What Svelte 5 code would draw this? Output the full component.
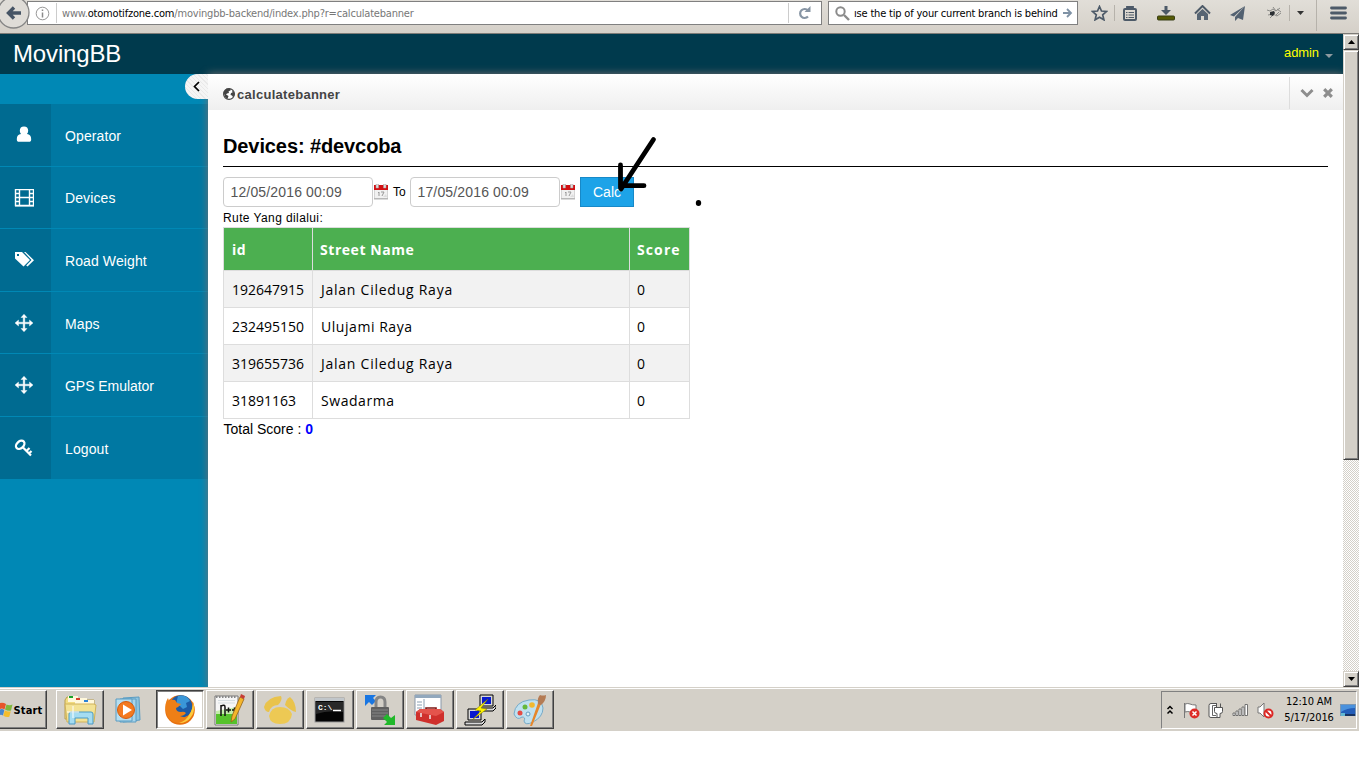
<script>
  const menu = ['Operator', 'Devices', 'Road Weight', 'Maps', 'GPS Emulator', 'Logout'];
  const glyphs = ['user', 'film', 'tags', 'move', 'move', 'key'];
  const rows = [
    ['192647915', 'Jalan Ciledug Raya', '0'],
    ['232495150', 'Ulujami Raya', '0'],
    ['319655736', 'Jalan Ciledug Raya', '0'],
    ['31891163', 'Swadarma', '0']
  ];
</script>

{#snippet calendar()}
  <svg class="cal" width="14" height="16" viewBox="0 0 14 16">
    <rect x="0" y="1" width="14" height="14.5" fill="#b8b8b8" />
    <rect x="0.5" y="5" width="13" height="9" fill="#f1f1f1" />
    <rect x="0" y="1" width="14" height="5" fill="#d20f12" />
    <path d="M2 0h2.500v4H2zM9.500 0H12v4H9.500z" fill="#ddd" stroke="#a99" stroke-width=".5" />
    <path d="M4 9l1-1v4M7 8h3l-2 4" fill="none" stroke="#999" />
    <path d="M9 13l3-3 1 3z" fill="#ddd" />
  </svg>
{/snippet}

<div class="screen">
  <div class="toolbar">
    <svg class="back" width="31" height="30" viewBox="0 0 31 30">
      <circle cx="13.500" cy="12.500" r="15.500" fill="#dfdcd7" stroke="#858585" stroke-width="1.300" />
      <path d="M14 7.500L8.500 13l5.500 5.500M9 13h12" fill="none" stroke="#465465" stroke-width="3.400" />
    </svg>
    <div class="url">
      <svg class="info" width="15" height="15" viewBox="0 0 15 15"><circle cx="7.500" cy="7.500" r="6.300" fill="none" stroke="#979797" /><path d="M7.500 3.500v1.500M7.500 6.500v5" stroke="#8a8a8a" stroke-width="1.500" /></svg>
      <i></i>
      <span class="address">www.<b>otomotifzone.com</b>/movingbb-backend/index.php?r=calculatebanner</span>
      <svg class="reload" width="33" height="20" viewBox="0 0 33 20"><path d="M.5 0v20" stroke="#ccc" /><path d="M20 7.500a4.500 4.500 0 1 0 0 6" fill="none" stroke="#8795a4" stroke-width="2.200" /><path d="M16.500 9h6V3z" fill="#8795a4" /></svg>
    </div>
    <div class="search">
      <svg width="15" height="15" viewBox="0 0 15 15"><circle cx="5.500" cy="5.500" r="4.200" fill="none" stroke="#8b8b8b" stroke-width="2" /><path d="M9 9l5 5" stroke="#8b8b8b" stroke-width="2.400" /></svg>
      <span>ıse the tip of your current branch is behind</span>
      <svg width="10" height="10" viewBox="0 0 10 10"><path d="M0 5h8M4 1l4 4-4 4" fill="none" stroke="#7f92a5" stroke-width="1.800" /></svg>
    </div>
    <div class="tools">
      <span class="line"><svg width="17" height="16" viewBox="0 0 17 16"><path d="M8.500 1.500l2 4.500 5 .5-3.800 3.300 1.200 5-4.400-2.600-4.400 2.600 1.200-5L1.500 6.500l5-.5z" fill="none" stroke="#4d5a68" stroke-width="1.700" /></svg></span>
      <span><svg width="14" height="15" viewBox="0 0 14 15"><rect x="1" y="3" width="12" height="11" rx="1" fill="none" stroke="#4d5a68" stroke-width="2" /><path d="M4 3V1h6v2" fill="none" stroke="#4d5a68" stroke-width="1.800" /><path d="M3 6.500h1.500M5.500 6.500H11M3 9h1.500M5.500 9H11M3 11.500h1.500M5.500 11.500H11" stroke="#4d5a68" stroke-width="1.200" /></svg></span>
      <span><svg width="18" height="15" viewBox="0 0 18 15"><path d="M7.500 0h3v4H14L9 9 4 4h3.500z" fill="#4d5a68" /><rect x=".5" y="10" width="17" height="4" rx="1" fill="#565b05" stroke="#383e17" /></svg></span>
      <span><svg width="17" height="16" viewBox="0 0 17 16"><path d="M1 8.500L8.500 1 16 8.500" fill="none" stroke="#4d5a68" stroke-width="2" /><path d="M3 9l5.500-5L14 9v6h-4v-4H7v4H3z" fill="#566473" /></svg></span>
      <span><svg width="15" height="15" viewBox="0 0 15 15"><path d="M15 0L0 9l4 1.500zM15 0L5 11v4l3-3 5 2z" fill="#536171" /></svg></span>
      <span class="line"><svg width="16" height="14" viewBox="0 0 16 14"><path d="M1 4l3 1L7 3l3 2 4-3M2 9l5-1 4 2 4-3M4 12l3-3M10 9l3-3M7 1l3 4M11 3l4 3" fill="none" stroke="#8b8b88" /><path d="M4 6l4-1 1 2-2 3-3-1z" fill="#2c3034" /></svg></span>
      <span class="line caret"><svg width="7" height="4" viewBox="0 0 7 4"><path d="M0 0h7L3.500 4z" fill="#333" /></svg></span>
      <span><svg width="17" height="14" viewBox="0 0 17 14"><path d="M1.500 2h14M1.500 7h14M1.500 12h14" stroke="#4d5a68" stroke-width="2.800" stroke-linecap="round" /></svg></span>
    </div>
  </div>

  <div class="page">
    <div class="app">
      <header><span class="brand">MovingBB</span><span class="admin">admin</span><svg width="8" height="4" viewBox="0 0 8 4"><path d="M0 0h8L4 4z" fill="#8e9aa0" /></svg></header>
      <div class="body">
        <nav>
          <button class="toggle" aria-label="Collapse"><svg width="7" height="11" viewBox="0 0 7 11"><path d="M6 1L1.500 5.500 6 10" fill="none" stroke="#000" stroke-width="1.700" /></svg></button>
          <ul>
            {#each menu as label, i}
              <li>
                <span class="glyph">
                  <svg width="20" height="18" viewBox="0 0 20 18" fill="#fff">
                    {#if glyphs[i] === 'user'}
                      <path d="M10 .5c2.700 0 4.200 1.600 4.200 4.200 0 1.300-.4 2.400-1.200 3.300 2.700.2 4.200 2 4.200 5.200 0 1.800-.8 2.600-2.200 2.600H5c-1.400 0-2.200-.8-2.200-2.600C2.800 10 4.300 8.200 7 8c-.8-.9-1.200-2-1.200-3.300C5.800 2.100 7.300.500 10 .500z" />
                    {:else if glyphs[i] === 'film'}
                      <path d="M1.500.500h18v16h-18zM5.500.500v16M15.500.500v16M5.500 8.500h10M1.500 4.500h4M1.500 8.500h4M1.500 12.500h4M15.500 4.500h4M15.500 8.500h4M15.500 12.500h4" fill="none" stroke="#fff" stroke-width="1.400" /><path d="M1 16h19v1.500H1z" />
                    {:else if glyphs[i] === 'tags'}
                      <path d="M1 1h7l8 8-6.500 6.500L1 7.500zM3 3v2h2V3z" fill-rule="evenodd" /><path d="M10 1h1.500L20 9.300 13.500 15.500l-1.300-1L17.500 9z" />
                    {:else if glyphs[i] === 'move'}
                      <path d="M10 .2l3 3.300h-2.200v4.700h4.700V6L19 9l-3.500 3V9.800h-4.700v4.700H13l-3 3.300-3-3.300h2.200V9.800H4.500V12L1 9l3.500-3v2.200h4.700V3.500H7z" stroke="#fff" stroke-width=".4" />
                    {:else}
                      <ellipse cx="6.200" cy="5.800" rx="4.800" ry="3.400" transform="rotate(-42 6.200 5.800)" fill="none" stroke="#fff" stroke-width="2.300" /><path d="M8.500 8l8.500 8.500M12.500 12l3-3M15 14.500l2.500-2.500" fill="none" stroke="#fff" stroke-width="2.200" />
                    {/if}
                  </svg>
                </span>
                <span class="label">{label}</span>
              </li>
            {/each}
          </ul>
        </nav>
        <main>
          <div class="crumb">
            <svg width="12" height="12" viewBox="0 0 12 12"><circle cx="6" cy="6" r="5.400" fill="#fff" stroke="#444" stroke-width="1.200" /><path d="M.5 4l3-3.500L7 .5 8 2 5.500 3.500 6 5 4 5.500 3 6.500 5.500 8 4.500 11 2 9zM9 2l2.500 3v2L10 9 9 7.500 7.500 7 8 5l1.500-.5z" fill="#444" /></svg>
            <b>calculatebanner</b>
            <div class="acts">
              <svg width="14" height="10" viewBox="0 0 14 10"><path d="M1.500 2l5.500 5.500L12.500 2" fill="none" stroke="#8d8d8d" stroke-width="3" /></svg>
              <svg width="10" height="10" viewBox="0 0 10 10"><path d="M1.200 1.200l7.600 7.600M8.800 1.200L1.200 8.800" stroke="#8d8d8d" stroke-width="3.200" /></svg>
            </div>
          </div>
          <section>
            <h1>Devices: #devcoba</h1>
            <div class="range">
              <input value="12/05/2016 00:09" />
              {@render calendar()}
              <span class="to">To</span>
              <input value="17/05/2016 00:09" />
              {@render calendar()}
              <button class="calc">Calc</button>
            </div>
            <p class="rute">Rute Yang dilalui:</p>
            <table>
              <thead><tr><th>id</th><th>Street Name</th><th>Score</th></tr></thead>
              <tbody>
                {#each rows as r}
                  <tr><td>{r[0]}</td><td class="street">{r[1]}</td><td>{r[2]}</td></tr>
                {/each}
              </tbody>
            </table>
            <p class="total">Total Score : <b>0</b></p>
          </section>
        </main>
      </div>
    </div>
    <div class="scroll">
      <div class="sbtn"><svg width="7" height="4" viewBox="0 0 7 4"><path d="M0 4h7L3.500 0z" /></svg></div>
      <div class="thumb"></div>
      <div class="track"></div>
      <div class="sbtn"><svg width="7" height="4" viewBox="0 0 7 4"><path d="M0 0h7L3.500 4z" /></svg></div>
    </div>
  </div>

  <div class="taskbar">
    <div class="start">
      <svg width="13" height="16" viewBox="0 0 13 16"><path d="M0 1q3-1 6 1L4.500 7.500Q2 6 0 7z" fill="#e8552b" /><path d="M6.500 2.500q3 1.500 6 0l-1.500 6q-3 1-6-1z" fill="#80b83b" /><path d="M0 7.500q2-1 4.300.5L3 13.500Q1.500 12.500 0 13z" fill="#4587cf" /><path d="M4.800 8.200q3 2 6 1l-1.500 5.500q-3 1-6-1z" fill="#f4bd2c" /></svg>
      <b>Start</b>
    </div>
    <div class="tasks">
      <div class="task">
        <svg width="34" height="32" viewBox="0 0 34 32"><path d="M2 6l2-3h9l2 3h16v19H2z" fill="#f2dc82" stroke="#b99f50" /><rect x="5" y="2" width="10" height="6" fill="#fff8dc" /><rect x="6" y="2" width="4" height="2" fill="#18a42b" /><rect x="12" y="4" width="12" height="6" fill="#fff8dc" /><rect x="13" y="4" width="4" height="2" fill="#d83e2a" /><rect x="20" y="6" width="11" height="5" fill="#fff8dc" /><rect x="21" y="6" width="4" height="2" fill="#2a83d8" /><path d="M2 10h29l2 1-2 17H4z" fill="#f3e294" stroke="#d0b25a" /><path d="M6 30V20q0-2 2-2h20q2 0 2 2v10h-5v-6H12v6z" fill="#a5dcf1" stroke="#4b9ac4" /><path d="M10 12v12M4 18h12" stroke="#fff" /></svg>
      </div>
      <div class="task flat">
        <svg width="30" height="28" viewBox="0 0 30 28"><path d="M8 2l16-1 1 23-17 2z" fill="#8fc5df" stroke="#5b9cc2" /><path d="M5 3h16v23H5z" fill="#a8d5ec" stroke="#5b9cc2" /><path d="M1 3h16v22H1z" fill="#b6def0" stroke="#5b9cc2" /><circle cx="11" cy="14" r="8.500" fill="#f47a20" stroke="#d35b0f" /><path d="M8 8.500v11l9-5.500z" fill="#fff" /></svg>
      </div>
      <div class="task pressed">
        <svg width="32" height="32" viewBox="0 0 32 32"><circle cx="16" cy="16" r="14.800" fill="#e8710f" /><circle cx="17" cy="12.500" r="11.300" fill="#1d5ba6" /><path d="M14 2q8-2 12 5l-4 2 1 4-4 2-3-3-4-1 1-5z" fill="#3a97d8" /><path d="M29 8q3 8-1 14-5 8-14 7Q4 28 2 18 0 10 4 4l1 3q3-2 6-1l2 3 4 1-3 3-2 1q0 4 5 4 3-1 5 1-2 3-6 3 6 3 10-2 3-5 3-12z" fill="#ee7f16" /><path d="M29 8q3 9-2 15-4 6-12 6 8-3 10-8 4-6 4-13z" fill="#fccb3d" /></svg>
      </div>
      <div class="task">
        <svg width="32" height="32" viewBox="0 0 32 32"><path d="M1 2h23v29H1z" fill="#f6f6f6" stroke="#777" /><path d="M2 18l21-4v16H2z" fill="#56c22c" /><path d="M2 17l21-4v7H2z" fill="#c3edaa" /><path d="M2 3h21" stroke="#888" stroke-width="2" stroke-dasharray="1.500 1.500" /><path d="M4 6.500h17M4 9h17" stroke="#d5dde1" /><path d="M7 22V11M7 12q4-2 4 1v9M12 16h5M14.500 13.500v5M18 16h5M20.500 13.500v5" fill="none" stroke="#111" stroke-width="1.500" /><path d="M17 28l1-6L26 3l4 2-9 20z" fill="#f4b62c" stroke="#96631b" stroke-width=".8" /><path d="M26 3l1-3 4 2-1 3z" fill="#c73c35" /></svg>
      </div>
      <div class="task">
        <svg width="32" height="30" viewBox="0 0 32 30"><path d="M0 12Q3 2 17 1q2 4-3 9-7 0-9 7-4 0-5-5z" fill="#e9c34c" /><path d="M21 10Q22 4 26 2q6 5 6 15-5-1-11-7z" fill="#e9c34c" /><path d="M5 21q2-9 11-9 9 0 12 7-1 10-12 10Q6 29 5 21z" fill="#edc954" /></svg>
      </div>
      <div class="task">
        <svg width="32" height="28" viewBox="0 0 32 28"><rect x="1" y="2" width="29" height="24" fill="#050505" stroke="#999" /><rect x="1" y="2" width="29" height="3" fill="#c1c6ca" /><path d="M2 6h27v10Q14 14 2 18z" fill="#292929" /><text x="4" y="14" fill="#fff" font-size="8" font-weight="700" font-family="Liberation Mono">C:\</text><path d="M19 14.500h8" stroke="#fff" stroke-width="1.500" /></svg>
      </div>
      <div class="task">
        <svg width="32" height="32" viewBox="0 0 32 32"><path d="M1 1h11L9 4l3 3-4 4-3-3-4 4z" fill="#1976e2" /><path d="M12 14V8q0-5 4.500-5T21 8v6" fill="none" stroke="#858585" stroke-width="3" /><rect x="7" y="13" width="18" height="13" rx="1" fill="#606060" /><path d="M8 16h16M8 19h16M8 22h16" stroke="#858585" /><path d="M31 31H20l3-3-4-4 4-4 4 4 4-3z" fill="#20b82a" /></svg>
      </div>
      <div class="task">
        <svg width="32" height="32" viewBox="0 0 32 32"><path d="M1 1h26v20H1z" fill="#fff" stroke="#8998a9" /><path d="M1 1h26v3H1z" fill="#92a8bd" /><path d="M3 8h5M3 11h5M3 14h5M10 5v15" stroke="#8ba0b3" /><path d="M12 16v-2h10v2" fill="none" stroke="#7d1714" stroke-width="1.600" /><path d="M2 18l4-3h20l4 3v9l-8 4-20-5z" fill="#cf302c" /><path d="M2 18l4-3h20l4 3-8 4z" fill="#e4544c" /><path d="M7 19v4M16 21v4" stroke="#eee" stroke-width="1.500" /></svg>
      </div>
      <div class="task">
        <svg width="32" height="32" viewBox="0 0 32 32"><path d="M16 1h13v11H16zM14 14h15l3-3v3l-3 3H14zM4 15h13v11H4zM1 28h17l3-3v3l-3 3H1z" fill="#d8d8d8" stroke="#000" /><path d="M18 3h9v7h-9zM6 17h9v7H6z" fill="#0719ce" /><path d="M24 5L11 16l6 1-9 9 15-11-6-1z" fill="#fff200" stroke="#777500" stroke-width=".5" /></svg>
      </div>
      <div class="task">
        <svg width="34" height="32" viewBox="0 0 34 32"><path d="M1 20Q2 8 16 6q13-2 14 8 0 9-10 14-8 4-9-1 2-4-2-4-5 4-8-3z" fill="#bfe0ef" stroke="#76aac8" /><circle cx="7" cy="19" r="2.500" fill="#e54b43" /><circle cx="12" cy="13" r="2.500" fill="#66b83b" /><circle cx="19" cy="11" r="2.800" fill="#f2b82e" /><circle cx="15" cy="20" r="2" fill="#e3f2f7" stroke="#659dc0" /><path d="M17 32L25 9l3 1-9 22z" fill="#e5872c" /><path d="M25 10q-1-6 2-9 3 1 6 0 0 6-5 10z" fill="#b47b54" /></svg>
      </div>
    </div>
    <div class="tray">
      <svg width="8" height="10" viewBox="0 0 8 10"><path d="M1.500 4L4 1.500 6.500 4M1.500 8.500L4 6l2.500 2.500" fill="none" stroke="#000" stroke-width="1.500" /></svg>
      <svg class="flag" width="17" height="17" viewBox="0 0 17 17"><path d="M1.500 1v15M2 2q3-1 5 0t6 1v7q-4 1-6 0t-5 0z" fill="#fff" stroke="#777" /><circle cx="11.500" cy="11.500" r="5" fill="#dd2b27" /><path d="M9.500 9.500l4 4M13.500 9.500l-4 4" stroke="#fff" stroke-width="1.500" /></svg>
      <svg width="16" height="17" viewBox="0 0 16 17"><path d="M9 1.500H3q-2 0-2 2V14q0 1.500 2 1.500h6" fill="#fff" stroke="#555" /><path d="M4.500 3.500H9M4.500 3.500v10H8" fill="none" stroke="#666" /><path d="M8.500 1.500v4M12.500 1.500v4M6.500 5.500h8v4q0 2-2.500 2v4H9v-4q-2.500 0-2.500-2z" fill="#fff" stroke="#555" /></svg>
      <svg width="17" height="14" viewBox="0 0 17 14"><path d="M1 10h2v2.500H1zM4 8h2v4.500H4zM7 6h2v6.500H7zM10 4h2v8.500h-2zM13 1.500h2.500v11H13z" fill="#fff" stroke="#666" stroke-width=".9" /></svg>
      <svg width="17" height="17" viewBox="0 0 17 17"><path d="M1 5h2l4-4v14l-4-4H1z" fill="#fff" stroke="#777" /><circle cx="11.500" cy="11.500" r="4" fill="#fff" stroke="#dc2824" stroke-width="2" /><path d="M9 9l5 5" stroke="#dc2824" stroke-width="2" /></svg>
      <div class="clock"><span>12:10 AM</span><span>5/17/2016</span></div>
      <svg class="desk" width="16" height="13" viewBox="0 0 16 13"><rect x=".5" y=".5" width="15" height="11" fill="#245eb9" stroke="#7997b5" /><path d="M1 1h14v3Q7 4 1 8z" fill="#4a91dd" /><path d="M1 11h14" stroke="#173464" stroke-width="2" /><path d="M1 9h4v3H1z" fill="#61b7d1" /></svg>
    </div>
  </div>

  <svg class="ink" width="100" height="80" viewBox="610 130 100 80">
    <path d="M653.500 139.500L621 189M620.500 165v23M621 185.700h23" fill="none" stroke="#000" stroke-width="4.800" stroke-linecap="round" />
    <ellipse cx="698.500" cy="203" rx="2.700" ry="3" />
  </svg>
</div>

<style>
  :global(body) { background: #fff; overflow: hidden; }
  * { box-sizing: border-box; }
  .screen { width: 1359px; height: 731px; position: relative; font-family: "Liberation Sans", Arial, sans-serif; display: flex; flex-direction: column; }
  svg { display: block; flex: none; }
  .toolbar { height: 34px; flex: none; display: flex; align-items: flex-start; background: linear-gradient(#e1ded8, #d5d0c8); border-bottom: 1px solid #7d7b77; }
  .back { margin-right: -4px; z-index: 1; }
  .url { width: 795px; height: 24px; margin-top: 1px; border: 1px solid #808080; background: #fff; display: flex; align-items: center; padding-left: 8px; }
  .info { margin-left: -1px; }
  .url i { width: 1px; height: 20px; background: #ccc; margin: 0 5px 0 6px; }
  .address { flex: 1; font: 11px "DejaVu Sans Condensed", "DejaVu Sans", sans-serif; font-stretch: condensed; color: #777; letter-spacing: -.19px; white-space: nowrap; padding-top: 1px; }
  .address b { font-weight: 400; color: #000; }
  .search { width: 250px; height: 24px; margin: 1px 0 0 6px; border: 1px solid #808080; background: #fff; display: flex; align-items: center; padding: 0 4px 0 6px; }
  .search span { flex: 1; margin-left: 4px; padding-top: 1px; font: 11px "DejaVu Sans", sans-serif; font-stretch: condensed; letter-spacing: -.19px; white-space: nowrap; }
  .tools { display: grid; grid-template-columns: 31px 30px 42px 30px 40px 33px 27px 42px; height: 33px; margin-left: 6px; }
  .tools span { display: flex; align-items: center; justify-content: center; padding-bottom: 7px; }
  .tools .line { background: linear-gradient(#b6b2ab, #b6b2ab) right 5px / 1px 16px no-repeat; }
  .tools .caret { padding-right: 6px; background-size: 1px 31px; background-position: right 0; }
  .page { height: 653px; flex: none; display: flex; }
  .app { width: 1343px; display: flex; flex-direction: column; }
  header { height: 40px; flex: none; background: #003a4d; display: flex; align-items: center; padding: 0 10px 0 13px; }
  .brand { flex: 1; color: #fff; font-size: 24px; letter-spacing: -.15px; }
  .admin { color: #ff0; font-size: 13px; margin: -3px 6px 0 0; letter-spacing: -.1px; }
  header svg { margin-top: 4px; }
  .body { flex: 1; display: flex; overflow: visible; }
  nav { width: 208px; background: #0088b5; display: flex; flex-direction: column; }
  .toggle { align-self: flex-end; width: 23px; height: 25px; border: 0; padding: 0 0 0 8px; margin-bottom: 5px; border-radius: 13px 0 0 13px; background: repeating-linear-gradient(45deg, #f5f5f5 0 2px, #e9e9e9 2px 3px); z-index: 3; }
  ul { margin: 0; padding: 0; list-style: none; }
  li { height: 62.5px; display: flex; background: #0078a2; border-bottom: 1px solid #0088b5; }
  li:last-child { border-bottom: 0; }
  .glyph { width: 51px; background: #006b91; display: flex; justify-content: center; padding: 22px 3px 0 0; }
  .label { padding: 23.900px 0 0 14px; color: #fff; font-size: 14px; line-height: 16px; letter-spacing: .1px; }
  li:nth-child(4) .label, li:nth-child(6) .label { padding-top: 24.200px; }
  li:nth-child(5) .label { letter-spacing: -.05px; }
  main { width: 1135px; background: #fff; box-shadow: 0 0 8px #776f6d; clip-path: inset(-9px 0 0 -10px); z-index: 2; }
  .crumb { height: 36px; display: flex; align-items: center; padding: 4px 0 0 15px; background: linear-gradient(#fff, #efefef); }
  .crumb b { flex: 1; margin-left: 2px; font-size: 13px; color: #444; letter-spacing: .28px; }
  .acts { width: 54px; height: 32px; margin: -2px 0 0; border-left: 1px solid #ddd; display: flex; align-items: center; padding-left: 10px; gap: 9px; }
  section { padding: 0 15px; }
  h1 { margin: 0; height: 57px; padding-top: 25px; font-size: 20px; line-height: 22px; letter-spacing: -.1px; border-bottom: 1px solid #000; }
  .range { display: flex; align-items: center; height: 30px; margin-top: 10px; }
  input { width: 150px; height: 30px; border: 1px solid #ccc; border-radius: 4px; padding: 0 6.500px; font: 14px "Liberation Sans", sans-serif; letter-spacing: .15px; color: #555; background: #fff; }
  .cal { margin-left: 1px; }
  .to { font-size: 12px; margin: 0 4px 0 5px; width: 13px; }
  .calc { width: 54px; height: 30px; border: 1px solid #1789c8; background: #1da3e8; color: #fff; font: 14px "Liberation Sans", sans-serif; margin-left: 5px; padding: 0; }
  p { margin: 0; font-size: 12px; line-height: 22px; height: 20px; letter-spacing: .4px; }
  table { width: 467px; table-layout: fixed; border-collapse: collapse; font: 14px "Open Sans", sans-serif; }
  th, td { border: 1px solid #ddd; padding: 0 8px; height: 37px; text-align: left; }
  th { height: 43px; background: #4caf50; color: #fff; font-weight: 700; letter-spacing: .55px; }
  th:nth-child(1) { width: 89px; }
  th:nth-child(2) { width: 317px; }
  th:nth-child(2) { padding-left: 7px; }
  th:nth-child(3), td:nth-child(3) { padding-left: 7px; }
  th:nth-child(3) { padding-right: 0; letter-spacing: 1.1px; }
  tbody tr:nth-child(odd) { background: #f2f2f2; }
  .street { letter-spacing: .75px; }
  tr:nth-child(even) .street { letter-spacing: .55px; }
  .total { font-size: 14px; line-height: 21px; letter-spacing: 0; padding-left: .5px; }
  .total b { color: #00f; }
  .scroll { width: 16px; display: flex; flex-direction: column; background: #d6d2ca; }
  .sbtn, .thumb { background: #d4d0c8; border: 1px solid; border-color: #d4d0c8 #404040 #404040 #d4d0c8; box-shadow: inset 1px 1px #fff, inset -1px -1px #808080; }
  .sbtn { height: 16px; display: flex; align-items: center; justify-content: center; }
  .thumb { height: 410px; }
  .track { flex: 1; background: repeating-conic-gradient(#d4d0c8 0 25%, #fff 0 50%) 0 0 / 2px 2px; }
  .taskbar { height: 44px; flex: none; display: flex; align-items: flex-start; padding-top: 2px; background: #d4d0c8; border-top: 1px solid #d4d0c8; box-shadow: inset 0 1px #fff; }
  .start, .task { height: 39px; display: flex; align-items: center; background: #d4d0c8; border: 1px solid; border-color: #fff #404040 #404040 #fff; box-shadow: inset -1px -1px #808080; }
  .start { width: 47px; border-left: 0; margin-right: 9px; }
  .start b { font: 700 11px "DejaVu Sans Condensed", "DejaVu Sans", sans-serif; font-stretch: condensed; letter-spacing: .15px; margin-left: .5px; padding-top: 1px; }
  .tasks { display: flex; gap: 2px; flex: 1; }
  .task { width: 48px; justify-content: center; }
  .task.flat { border-color: transparent; box-shadow: none; }
  .task.pressed { background: #fff; border-color: #404040 #fff #fff #404040; box-shadow: inset 1px 1px #808080, inset -1px -1px #d4d0c8; }
  .tray { width: 196px; height: 38px; margin: 1px 2px 0 0; border: 1px solid; border-color: #808080 #fff #fff #808080; display: flex; align-items: center; padding-left: 4px; gap: 8px; }
  .flag { margin-left: 1px; }
  .clock { width: 56px; font: 11px/16px "DejaVu Sans", sans-serif; font-stretch: condensed; letter-spacing: -.15px; display: flex; flex-direction: column; align-items: center; white-space: nowrap; margin-left: -1px; }
  .desk { margin-left: -5px; }
  .ink { position: absolute; left: 610px; top: 130px; z-index: 5; }
</style>
